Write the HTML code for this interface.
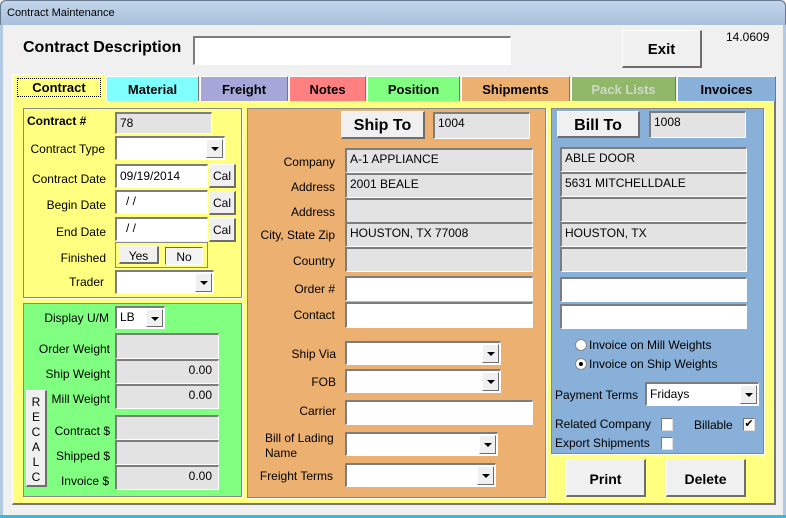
<!DOCTYPE html>
<html><head><meta charset="utf-8"><style>
*{box-sizing:border-box;margin:0;padding:0}
body{width:786px;height:518px;overflow:hidden;background:#f0f0f0;font-family:"Liberation Sans",Arial,sans-serif;font-size:12px;color:#000;position:relative}
div{position:absolute}
.win{left:0;top:0;width:786px;height:518px;border:1px solid #5a6a80;border-top:none;border-radius:6px 6px 0 0;background:#f0f0f0}
.tb{left:0;top:0;width:786px;height:25px;background:linear-gradient(#c2d5ea,#a9c1dc);border-radius:6px 6px 0 0;border:1px solid #6a7a90;border-bottom:none}
.side{background:#b3c9e2}
.f{background:#e3e3e3;border-top:2px solid #7d7d7d;border-left:2px solid #7d7d7d;border-bottom:1px solid #fff;border-right:1px solid #fff;padding:2px 0 0 3px;font-size:12px;white-space:nowrap}
.w{background:#fff}
.r{text-align:right;padding-right:6px}
.btn{background:#f0f0f0;border-top:1px solid #fff;border-left:1px solid #fff;border-right:2px solid #6e6e6e;border-bottom:2px solid #6e6e6e;text-align:center;font-weight:bold}
.dd{right:1px;top:1px;width:17px;bottom:1px;background:#f0f0f0;border-right:1px solid #6e6e6e;border-bottom:1px solid #6e6e6e;border-top:1px solid #fff;border-left:1px solid #fff}
.dd:after{content:"";position:absolute;left:4px;top:7px;border-left:4px solid transparent;border-right:4px solid transparent;border-top:4px solid #000}
.l{text-align:right;white-space:nowrap;font-size:12px}
.tab{top:76px;height:25px;text-align:center;font-weight:bold;font-size:13px;padding-top:5px;border-top:1px solid #fff;border-left:1px solid #fff;border-right:1px solid #777}
.grp{border:1px solid #888;box-shadow:1px 1px 0 #fff}
.cb{width:12px;height:13px;background:#fff;border-top:1px solid #777;border-left:1px solid #777;border-right:1px solid #ddd;border-bottom:1px solid #ddd}
.rad{width:12px;height:12px;border-radius:50%;background:#fff;border:1px solid #888}
</style></head><body>
<div class="win"></div>
<div class="tb"></div>
<div style="left:7px;top:7px;font-size:11px">Contract Maintenance</div>
<div style="left:0;top:25px;width:3px;height:493px" class="side"></div>
<div style="left:783px;top:25px;width:3px;height:493px" class="side"></div>
<div style="left:0;top:515px;width:786px;height:3px;background:#3cb8d8"></div>

<div style="left:23px;top:39px;font-size:16px;font-weight:bold">Contract Description</div>
<div class="f w" style="left:193px;top:36px;width:318px;height:29px"></div>
<div class="btn" style="left:622px;top:30px;width:80px;height:38px;font-size:15px;padding-top:10px">Exit</div>
<div style="left:726px;top:30px;font-size:12px">14.0609</div>

<!-- yellow panel -->
<div style="left:12px;top:100px;width:764px;height:405px;background:#ffff80;border-right:2px solid #777;border-bottom:2px solid #777;border-left:1px solid #fff"></div>
<div class="tab" style="left:12px;width:93px;background:#ffff80;top:74px;height:28px;border-right:none"><span style="border:1px dotted #000;padding:1px 14px">Contract</span></div>
<div class="tab" style="left:106px;width:93px;background:#80ffff">Material</div>
<div class="tab" style="left:200px;width:88px;background:#a6a6d8">Freight</div>
<div class="tab" style="left:289px;width:77px;background:#ff8080">Notes</div>
<div class="tab" style="left:367px;width:93px;background:#80ff80">Position</div>
<div class="tab" style="left:461px;width:109px;background:#ecb070">Shipments</div>
<div class="tab" style="left:571px;width:105px;background:#90b868;color:#d0d8c8">Pack Lists</div>
<div class="tab" style="left:677px;width:99px;background:#88b0d8">Invoices</div>

<!-- contract group -->
<div class="grp" style="left:23px;top:108px;width:219px;height:190px"></div>
<div style="left:27px;top:114px;font-weight:bold;font-size:12px">Contract #</div>
<div class="f" style="left:115px;top:112px;width:97px;height:22px">78</div>
<div class="l" style="left:20px;top:142px;width:85px">Contract Type</div>
<div class="f w" style="left:115px;top:136px;width:110px;height:24px"><div class="dd"></div></div>
<div class="l" style="left:20px;top:172px;width:86px">Contract Date</div>
<div class="f w" style="left:115px;top:164px;width:93px;height:24px;padding-top:3px">09/19/2014</div>
<div class="btn" style="left:209px;top:164px;width:27px;height:24px;font-weight:normal;padding-top:4px">Cal</div>
<div class="l" style="left:20px;top:198px;width:86px">Begin Date</div>
<div class="f w" style="left:115px;top:190px;width:93px;height:24px;padding-left:9px"> / /</div>
<div class="btn" style="left:209px;top:191px;width:27px;height:24px;font-weight:normal;padding-top:4px">Cal</div>
<div class="l" style="left:20px;top:225px;width:86px">End Date</div>
<div class="f w" style="left:115px;top:217px;width:93px;height:24px;padding-left:9px"> / /</div>
<div class="btn" style="left:209px;top:218px;width:27px;height:24px;font-weight:normal;padding-top:4px">Cal</div>
<div class="l" style="left:20px;top:251px;width:86px">Finished</div>
<div style="left:115px;top:242px;width:93px;height:26px;border:1px solid #888"></div>
<div class="btn" style="left:119px;top:246px;width:40px;height:18px;font-weight:normal;padding-top:2px">Yes</div>
<div class="btn" style="left:165px;top:247px;width:38px;height:18px;font-weight:normal;padding-top:2px;border-top:1px solid #666;border-left:1px solid #666;border-right:1px solid #fff;border-bottom:1px solid #fff;background:#f4f4f4">No</div>
<div class="l" style="left:20px;top:275px;width:84px">Trader</div>
<div class="f w" style="left:115px;top:270px;width:99px;height:24px"><div class="dd"></div></div>

<!-- green group -->
<div class="grp" style="left:23px;top:303px;width:219px;height:194px;background:#80ff80"></div>
<div class="l" style="left:20px;top:311px;width:89px">Display U/M</div>
<div class="f w" style="left:115px;top:306px;width:50px;height:23px">LB<div class="dd"></div></div>
<div class="l" style="left:20px;top:342px;width:90px">Order Weight</div>
<div class="f" style="left:115px;top:333px;width:104px;height:26px"></div>
<div class="l" style="left:20px;top:367px;width:90px">Ship Weight</div>
<div class="f r" style="left:115px;top:359px;width:104px;height:25px">0.00</div>
<div class="l" style="left:20px;top:392px;width:90px">Mill Weight</div>
<div class="f r" style="left:115px;top:384px;width:104px;height:25px">0.00</div>
<div class="btn" style="left:26px;top:390px;width:21px;height:97px;font-weight:normal;line-height:15px;padding-top:4px">R<br>E<br>C<br>A<br>L<br>C</div>
<div class="l" style="left:20px;top:424px;width:90px">Contract $</div>
<div class="f" style="left:115px;top:415px;width:104px;height:25px"></div>
<div class="l" style="left:20px;top:449px;width:90px">Shipped $</div>
<div class="f" style="left:115px;top:440px;width:104px;height:25px"></div>
<div class="l" style="left:20px;top:474px;width:89px">Invoice $</div>
<div class="f r" style="left:115px;top:465px;width:104px;height:25px">0.00</div>

<!-- orange panel -->
<div class="grp" style="left:247px;top:108px;width:299px;height:390px;background:#ecb070"></div>
<div class="btn" style="left:341px;top:111px;width:84px;height:28px;font-size:16px;padding-top:5px">Ship To</div>
<div class="f" style="left:433px;top:112px;width:97px;height:27px">1004</div>
<div class="l" style="left:240px;top:155px;width:95px">Company</div>
<div class="f" style="left:345px;top:148px;width:188px;height:25px">A-1 APPLIANCE</div>
<div class="l" style="left:240px;top:180px;width:95px">Address</div>
<div class="f" style="left:345px;top:173px;width:188px;height:25px">2001 BEALE</div>
<div class="l" style="left:240px;top:205px;width:95px">Address</div>
<div class="f" style="left:345px;top:198px;width:188px;height:25px"></div>
<div class="l" style="left:240px;top:228px;width:95px">City, State Zip</div>
<div class="f" style="left:345px;top:222px;width:188px;height:25px">HOUSTON, TX 77008</div>
<div class="l" style="left:240px;top:254px;width:95px">Country</div>
<div class="f" style="left:345px;top:247px;width:188px;height:25px"></div>
<div class="l" style="left:240px;top:282px;width:95px">Order #</div>
<div class="f w" style="left:345px;top:276px;width:188px;height:25px"></div>
<div class="l" style="left:240px;top:308px;width:95px">Contact</div>
<div class="f w" style="left:345px;top:302px;width:188px;height:26px"></div>
<div class="l" style="left:240px;top:347px;width:96px">Ship Via</div>
<div class="f w" style="left:345px;top:341px;width:156px;height:24px"><div class="dd"></div></div>
<div class="l" style="left:240px;top:375px;width:96px">FOB</div>
<div class="f w" style="left:345px;top:369px;width:156px;height:24px"><div class="dd"></div></div>
<div class="l" style="left:240px;top:404px;width:96px">Carrier</div>
<div class="f w" style="left:345px;top:400px;width:188px;height:25px"></div>
<div style="left:265px;top:431px;line-height:15px">Bill of Lading<br>Name</div>
<div class="f w" style="left:345px;top:432px;width:153px;height:24px"><div class="dd"></div></div>
<div class="l" style="left:240px;top:469px;width:93px">Freight Terms</div>
<div class="f w" style="left:345px;top:463px;width:151px;height:24px"><div class="dd"></div></div>

<!-- bill panel -->
<div class="grp" style="left:551px;top:108px;width:213px;height:346px;background:#88b0d8"></div>
<div class="btn" style="left:557px;top:111px;width:83px;height:27px;font-size:16px;padding-top:5px">Bill To</div>
<div class="f" style="left:649px;top:111px;width:97px;height:27px">1008</div>
<div class="f" style="left:560px;top:147px;width:187px;height:25px">ABLE DOOR</div>
<div class="f" style="left:560px;top:172px;width:187px;height:25px">5631 MITCHELLDALE</div>
<div class="f" style="left:560px;top:197px;width:187px;height:25px"></div>
<div class="f" style="left:560px;top:222px;width:187px;height:25px">HOUSTON, TX</div>
<div class="f" style="left:560px;top:247px;width:187px;height:25px"></div>
<div class="f w" style="left:560px;top:277px;width:187px;height:25px"></div>
<div class="f w" style="left:560px;top:304px;width:187px;height:25px"></div>
<div class="rad" style="left:575px;top:339px"></div>
<div style="left:589px;top:338px">Invoice on Mill Weights</div>
<div class="rad" style="left:575px;top:358px"><div style="left:3px;top:3px;width:4px;height:4px;border-radius:50%;background:#000"></div></div>
<div style="left:589px;top:357px">Invoice on Ship Weights</div>
<div style="left:555px;top:388px">Payment Terms</div>
<div class="f w" style="left:645px;top:382px;width:114px;height:24px;padding-top:3px">Fridays<div class="dd"></div></div>
<div style="left:555px;top:417px">Related Company</div>
<div class="cb" style="left:661px;top:418px"></div>
<div style="left:694px;top:418px">Billable</div>
<div class="cb" style="left:743px;top:418px;font-size:11px;line-height:10px;text-align:center">✔</div>
<div style="left:555px;top:436px">Export Shipments</div>
<div class="cb" style="left:661px;top:437px"></div>

<div class="btn" style="left:566px;top:459px;width:80px;height:38px;font-size:14px;padding-top:11px">Print</div>
<div class="btn" style="left:666px;top:459px;width:80px;height:38px;font-size:14px;padding-top:11px">Delete</div>
</body></html>
